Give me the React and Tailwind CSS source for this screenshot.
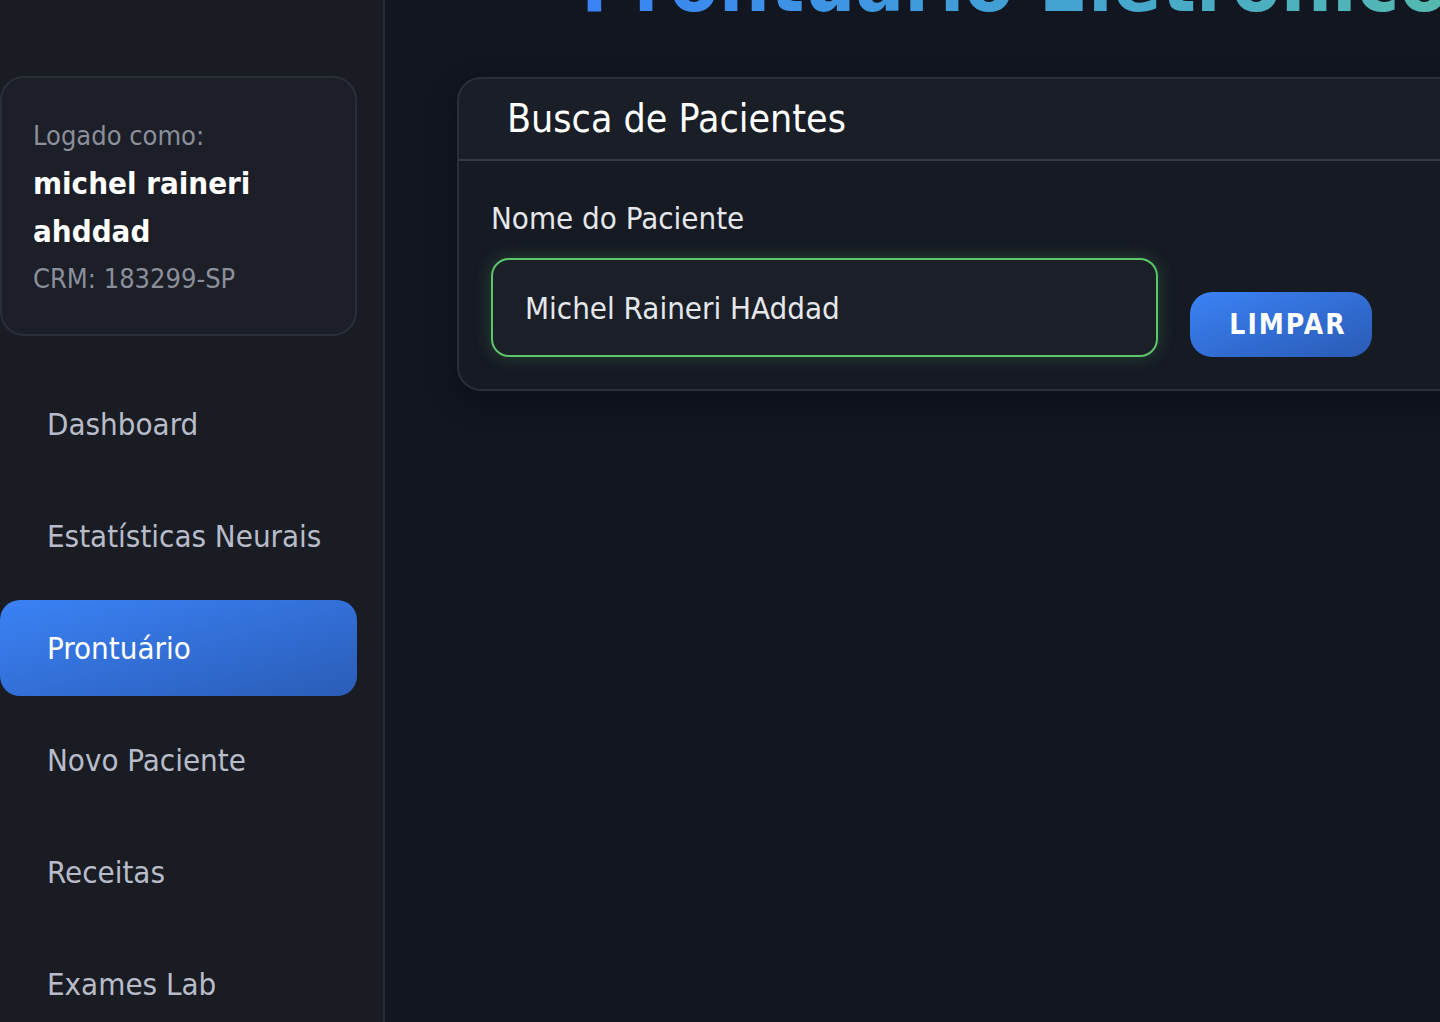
import React, { useState } from 'react';

const navItems = [
  'Dashboard',
  'Estatísticas Neurais',
  'Prontuário',
  'Novo Paciente',
  'Receitas',
  'Exames Lab',
];

const font = { fontFamily: '"DejaVu Sans Condensed", "DejaVu Sans", Verdana, sans-serif' };

const Sidebar = () => {
  const active = 'Prontuário';
  return (
    <aside className="w-[385px] shrink-0 bg-[#1a1c24] border-r-2 border-[#262a34] pr-[26px] pt-[76px]">
      <div className="rounded-[24px] border-2 border-[#2a2e38] bg-[#1c1f28] pl-[31px] pt-[34px] pb-[31px]">
        <p className="text-[27px] leading-[47px] text-[#8a8f9b]">Logado como:</p>
        <p className="text-[31px] leading-[48px] font-bold text-white">michel raineri ahddad</p>
        <p className="text-[27px] leading-[48px] text-[#8a8f9b]">CRM: 183299-SP</p>
      </div>

      <nav className="mt-[40px] flex flex-col gap-4">
        {navItems.map((item) => (
          <a
            key={item}
            href="#"
            className={
              item === active
                ? 'h-[96px] flex items-center pl-[47px] rounded-[20px] bg-gradient-to-br from-[#3b82f6] to-[#2a5db8] text-white text-[31px]'
                : 'h-[96px] flex items-center pl-[47px] rounded-[20px] text-[#b8bcc9] text-[31px]'
            }
          >
            {item}
          </a>
        ))}
      </nav>
    </aside>
  );
};

const PatientSearch = () => {
  const [name, setName] = useState('Michel Raineri HAddad');

  return (
    <section className="w-[1040px] shrink-0 rounded-[24px] border-2 border-[#2a2e38] bg-[#1a1e27] shadow-[0_10px_30px_rgba(0,0,0,0.35)]">
      <div className="h-[82px] flex items-center pl-[48px] border-b-2 border-[#353a45]">
        <h2 className="text-[39px] text-white">Busca de Pacientes</h2>
      </div>
      <div className="pl-[32px] pt-[37px] pb-[32px] bg-[#161a23] rounded-b-[24px]">
        <label className="block text-[31px] leading-[40px] text-[#e5e7eb]">Nome do Paciente</label>
        <div className="mt-[20px] flex items-end gap-[32px]">
          <input
            value={name}
            onChange={(e) => setName(e.target.value)}
            className="w-[667px] h-[99px] rounded-[18px] border-2 border-[#5cc46b] bg-[#1a1f28] pl-[32px] text-[31px] text-[#e5e7eb] outline-none shadow-[0_0_18px_rgba(92,196,107,0.25)] font-stretch-condensed"
            style={font}
          />
          <button
            type="button"
            onClick={() => setName('')}
            className="w-[182px] h-[65px] pl-[14px] rounded-[22px] bg-gradient-to-br from-[#3b82f6] to-[#2a5bb5] text-white text-[28px] font-bold tracking-[2px] flex items-center justify-center font-stretch-condensed"
            style={font}
          >
            LIMPAR
          </button>
        </div>
      </div>
    </section>
  );
};

export default function App() {
  return (
    <div className="h-[1022px] overflow-hidden flex bg-[#121620] font-stretch-condensed" style={font}>
      <Sidebar />
      <main className="flex-1 overflow-hidden">
        <h1 className="ml-[196px] -mt-[58px] h-[84px] whitespace-nowrap text-[80px] leading-[84px] font-bold bg-gradient-to-r from-[#3b82f6] to-[#5ec49a] bg-clip-text text-transparent w-max pr-[200px]">
          Prontuário Eletrônico
        </h1>
        <div className="mt-[51px] ml-[72px] flex">
          <PatientSearch />
        </div>
      </main>
    </div>
  );
}
